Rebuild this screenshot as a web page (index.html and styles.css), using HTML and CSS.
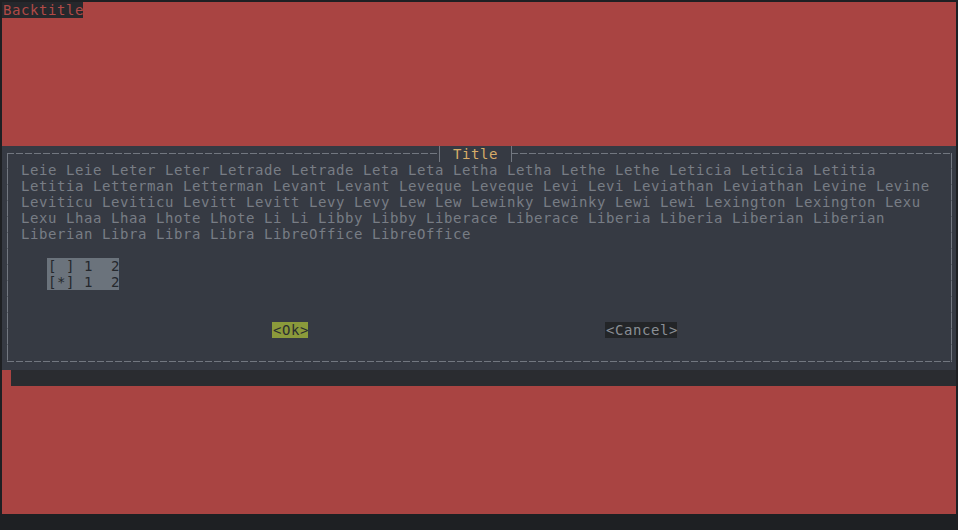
FILE: index.html
```html
<!DOCTYPE html>
<html>
<head>
<meta charset="utf-8">
<link rel="stylesheet" href="styles.css">
</head>
<body>
<div class="screen">
  <div class="backtitle-row"><span class="backtitle">Backtitle</span></div>
  <div class="dialog">
    <div class="frame">
      <div class="title">Title</div>
      <div class="message">Leie Leie Leter Leter Letrade Letrade Leta Leta Letha Letha Lethe Lethe Leticia Leticia Letitia
Letitia Letterman Letterman Levant Levant Leveque Leveque Levi Levi Leviathan Leviathan Levine Levine
Leviticu Leviticu Levitt Levitt Levy Levy Lew Lew Lewinky Lewinky Lewi Lewi Lexington Lexington Lexu
Lexu Lhaa Lhaa Lhote Lhote Li Li Libby Libby Liberace Liberace Liberia Liberia Liberian Liberian
Liberian Libra Libra Libra LibreOffice LibreOffice</div>
      <div class="checklist">
        <div class="item">[ ] 1  2</div>
        <div class="item">[*] 1  2</div>
      </div>
      <div class="buttons">
        <span class="btn ok">&lt;Ok&gt;</span>
        <span class="btn cancel">&lt;Cancel&gt;</span>
      </div>
    </div>
  </div>
  <div class="shadow"></div>
</div>
</body>
</html>
```
FILE: styles.css
```css
html, body {
  margin: 0;
  padding: 0;
}
body {
  width: 958px;
  height: 530px;
  overflow: hidden;
  background: #1e2023;
  font-family: "DejaVu Sans Mono", "Liberation Mono", monospace;
  font-size: 14px;
  letter-spacing: 0.57px;
  line-height: 16px;
}
.screen {
  margin: 2px 0 0 2px;
  width: 954px;
  height: 512px;
  background: #a94442;
  display: flex;
  flex-direction: column;
}
.backtitle-row {
  height: 16px;
  display: flex;
}
.backtitle {
  display: block;
  width: 80px;
  padding-left: 1px;
  height: 16px;
  background: #26282c;
  color: #b04a47;
  white-space: pre;
}
.dialog {
  margin-top: 128px;
  width: 954px;
  height: 224px;
  background: #363a43;
  display: flex;
  flex-direction: column;
}
.frame {
  position: relative;
  margin: 7px 4px 8px 5px;
  padding: 9px 13px 8px 14px;
  height: 209px;
  box-sizing: border-box;
  background:
    repeating-linear-gradient(90deg, #727780 0 7px, transparent 7px 9px) left top / 100% 1px no-repeat,
    repeating-linear-gradient(90deg, #727780 0 7px, transparent 7px 9px) left bottom / 100% 1px no-repeat,
    repeating-linear-gradient(180deg, #727780 0 15px, #5a5f67 15px 16px) left top / 1px 100% no-repeat,
    repeating-linear-gradient(180deg, #727780 0 15px, #5a5f67 15px 16px) right top / 1px 100% no-repeat;
}
.title {
  position: absolute;
  top: -7px;
  left: 432px;
  height: 16px;
  padding: 0 13px 0 13px;
  width: 45px;
  border-left: 1px solid #727780;
  border-right: 1px solid #727780;
  background: #363a43;
  color: #d6ac68;
  white-space: pre;
}
.message {
  white-space: pre;
  color: #787d85;
}
.checklist {
  margin: 16px 0 0 26px;
  width: 71px;
  padding-left: 1px;
  background: #6b737c;
  color: #25282d;
}
.item {
  white-space: pre;
  height: 16px;
}
.buttons {
  display: flex;
  gap: 297px;
  margin: 32px 0 0 251px;
  height: 16px;
}
.btn {
  display: block;
  height: 16px;
  padding-left: 1px;
  white-space: pre;
}
.ok {
  width: 35px;
  background: #8b9a3b;
  color: #2b2e30;
}
.cancel {
  width: 71px;
  background: #232528;
  color: #8a8f96;
}
.shadow {
  margin-left: 9px;
  height: 16px;
  width: 945px;
  background: #2a2c30;
}
```
